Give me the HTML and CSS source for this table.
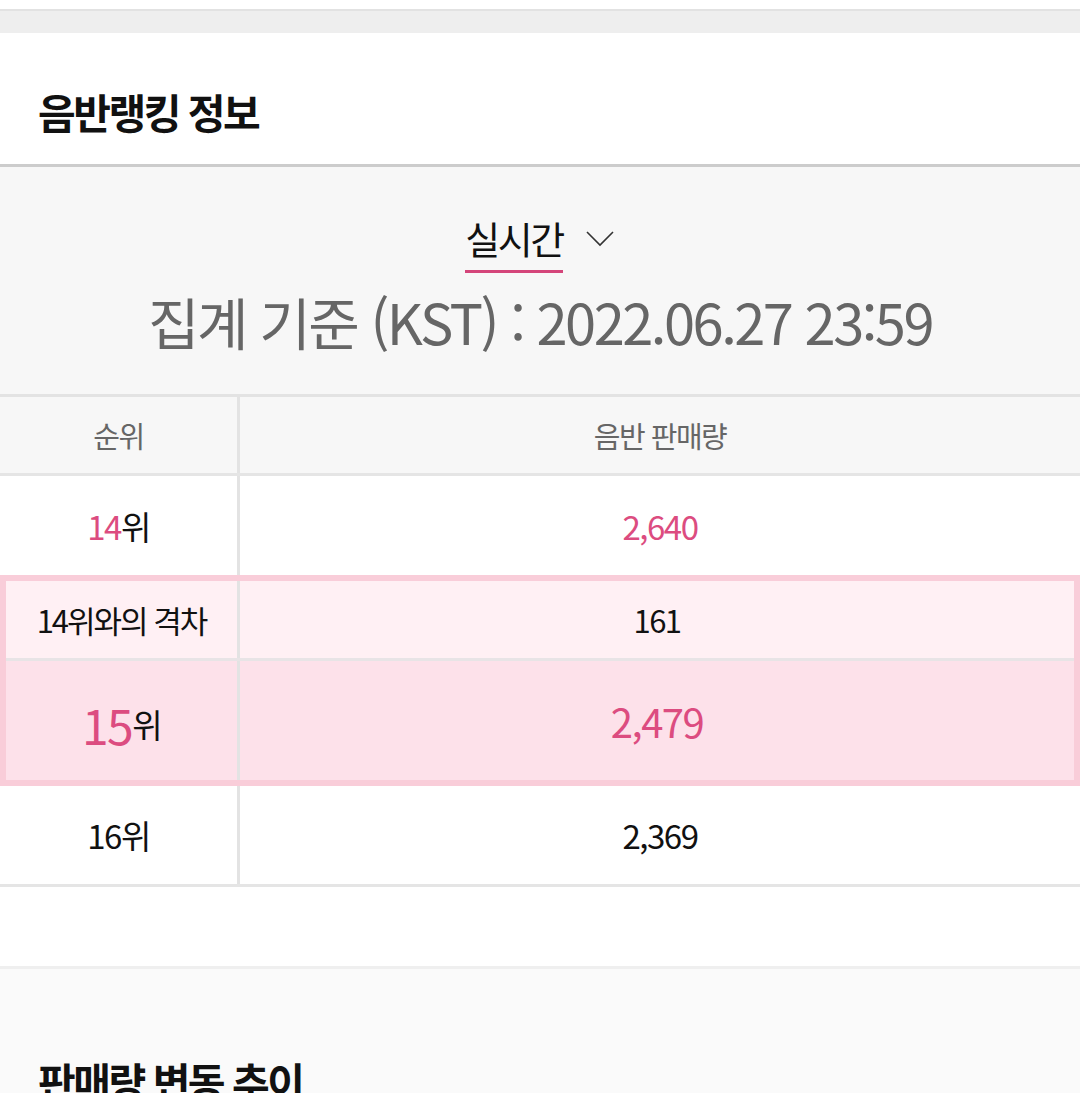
FILE: index.html
```html
<!DOCTYPE html>
<html lang="ko">
<head>
<meta charset="utf-8">
<link rel="stylesheet" href="styles.css">
</head>
<body>
<div class="top-gap"></div>
<div class="top-band"></div>
<section class="section">
  <h2 class="sec-title">음반랭킹 정보</h2>
</section>
<div class="filter">
  <div class="tab-row">
    <span class="tab">실시간</span>
    <svg class="chev" width="30" height="18" viewBox="0 0 30 18"><polyline points="2,2 15,15 28,2" fill="none" stroke="#333" stroke-width="1.6"/></svg>
  </div>
  <div class="basis">집계 기준 (KST) : 2022.06.27 23:59</div>
</div>
<div class="table">
  <div class="row head">
    <div class="c1">순위</div>
    <div class="c2">음반 판매량</div>
  </div>
  <div class="row r">
    <div class="c1"><span class="pk">14</span>위</div>
    <div class="c2 pk">2,640</div>
  </div>
  <div class="hl">
    <div class="row gap">
      <div class="c1">14위와의 격차</div>
      <div class="c2">161</div>
    </div>
    <div class="row me">
      <div class="c1"><span class="pk big">15</span>위</div>
      <div class="c2 pk mid">2,479</div>
    </div>
  </div>
  <div class="row r last">
    <div class="c1">16위</div>
    <div class="c2">2,369</div>
  </div>
</div>
<div class="spacer"></div>
<section class="section2">
  <h2 class="sec-title2">판매량 변동 추이</h2>
</section>
</body>
</html>
```
FILE: styles.css
```css
* { box-sizing: border-box; }
html, body { margin: 0; padding: 0; }
body {
  width: 1080px;
  height: 1093px;
  overflow: hidden;
  background: #fff;
  font-family: "Noto Sans CJK KR", "Noto Sans", sans-serif;
  color: #111;
}
.top-gap { height: 9px; background: #fff; }
.top-band { height: 24px; background: #eeeeee; border-top: 2px solid #e2e2e2; }
.section { height: 134px; border-bottom: 3px solid #cccccc; display: flex; align-items: center; padding-left: 38px; padding-top: 24px; }
.sec-title { margin: 0; font-size: 41px; font-weight: 700; letter-spacing: -2.5px; color: #111; }
.filter { height: 230px; background: #f7f7f7; border-bottom: 3px solid #e3e3e3; display: flex; flex-direction: column; align-items: center; padding-top: 46px; }
.tab-row { display: flex; align-items: flex-start; gap: 22px; }
.tab { font-size: 38px; line-height: 50px; letter-spacing: -2.5px; color: #111; border-bottom: 3px solid #d4457a; padding-bottom: 7px; }
.chev { margin-top: 17px; }
.basis { font-size: 56px; color: #666; letter-spacing: -2.5px; margin-top: 16px; line-height: 64px; }
.row { display: flex; border-bottom: 3px solid #e5e5e5; }
.c1 { width: 240px; border-right: 3px solid #e3e3e3; display: flex; align-items: center; justify-content: center; letter-spacing: -1.5px; }
.c2 { flex: 1; display: flex; align-items: center; justify-content: center; letter-spacing: -1.5px; }
.head { height: 79px; background: #f7f7f7; font-size: 29px; color: #666; }
.r { height: 102px; font-size: 33px; }
.pk { color: #dc4c80; }
.hl { border: 6px solid #f9cdd9; margin-top: -3px; }
.hl .row { border-bottom: none; }
.hl .c1 { width: 234px; }
.gap { height: 80px; background: #fff0f4; font-size: 31px; border-bottom: 3px solid #e8e4e6 !important; }
.gap .c1 { letter-spacing: -2px; }
.me { height: 119px; background: #fde1ea; font-size: 33px; }
.me .c1 { padding-top: 6px; }
.big { font-size: 48px; }
.mid { font-size: 40px; }
.last { height: 101px; }
.spacer { height: 79px; }
.section2 { border-top: 3px solid #efefef; background: #fafafa; height: 127px; overflow: hidden; padding: 86px 0 0 38px; }
.sec-title2 { margin: 0; font-size: 41px; font-weight: 700; letter-spacing: -2.5px; color: #111; line-height: 50px; }
```
